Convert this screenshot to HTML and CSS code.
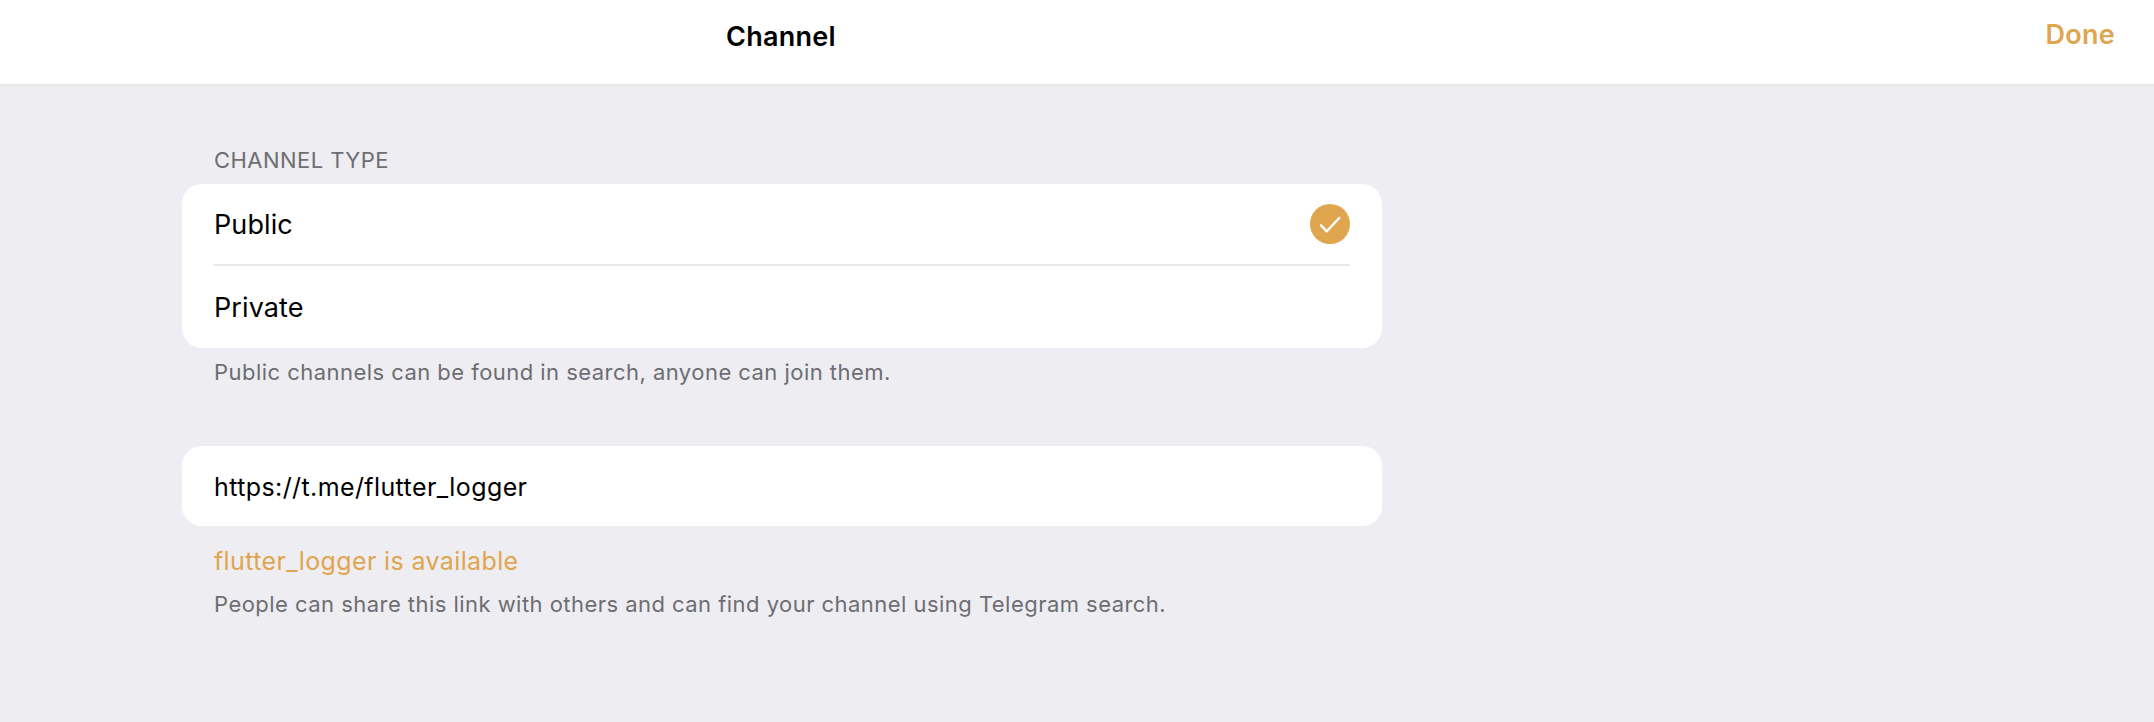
FILE: index.html
```
<!DOCTYPE html>
<html lang="en">
<head>
<meta charset="utf-8">
<title>Channel</title>
<link rel="stylesheet" href="styles.css">
</head>
<body>
<header class="topbar">
<h1 class="title">Channel</h1>
<button class="done">Done</button>
</header>
<main class="content">
<h2 class="section-label">CHANNEL TYPE</h2>
<div class="card">
<div class="row row-divided"><span>Public</span>
<svg class="check" viewBox="0 0 40 40"><circle cx="20" cy="20" r="20"/><path d="M11 21.3 L16.8 27.3 L29.2 14"/></svg>
</div>
<div class="row"><span>Private</span></div>
</div>
<p class="note">Public channels can be found in search, anyone can join them.</p>
<div class="card link-card">
<div class="row row-link"><span>https://t.me/flutter_logger</span></div>
</div>
<p class="status">flutter_logger is available</p>
<p class="note note-link">People can share this link with others and can find your channel using Telegram search.</p>
</main>
</body>
</html>
```
FILE: styles.css
```
* { box-sizing: border-box; }
body {
  margin: 0;
  min-height: 722px;
  background: #eeedf2;
  color: #000;
  font-family: Inter, "Liberation Sans", sans-serif;
}
h1, h2, p { margin: 0; font-weight: 400; }
.topbar {
  height: 86px;
  display: flex;
  justify-content: space-between;
  align-items: flex-start;
  padding: 17px 39px 0 726px;
  background: #fff;
  border-bottom: 2px solid #e8e8ea;
}
.title { font-size: 27px; font-weight: 600; line-height: 40px; letter-spacing: 0.25px; }
.done {
  margin-top: -1px;
  border: 0;
  padding: 0;
  background: none;
  color: #e0a54f;
  font: 600 27px/38px Inter, "Liberation Sans", sans-serif;
  letter-spacing: 0.3px;
}
.content { width: 1200px; margin-left: 182px; padding-top: 60px; }
.section-label {
  height: 38px;
  padding-left: 32px;
  font-size: 22px;
  line-height: 28px;
  letter-spacing: 0.46px;
  color: #6d6d72;
}
.card { background: #fff; border-radius: 20px; padding: 0 32px; }
.row {
  height: 82px;
  display: flex;
  align-items: center;
  justify-content: space-between;
  font-size: 27px;
  letter-spacing: 0.1px;
}
.row-divided { border-bottom: 2px solid #e8e8e9; }
.check { width: 40px; height: 40px; }
.check circle { fill: #e0a54f; }
.check path { fill: none; stroke: #fff; stroke-width: 2.4; stroke-linecap: round; stroke-linejoin: round; }
.note {
  padding: 10px 32px 0;
  font-size: 22px;
  line-height: 28px;
  letter-spacing: 0.46px;
  color: #6d6d72;
}
.link-card { margin-top: 60px; }
.row-link { height: 80px; padding-top: 2px; font-size: 25px; letter-spacing: 0.4px; }
.status {
  padding: 20px 32px 0;
  font-size: 25px;
  line-height: 30px;
  letter-spacing: 0.37px;
  color: #e0a54f;
}
.note-link { padding-top: 14px; }
```
